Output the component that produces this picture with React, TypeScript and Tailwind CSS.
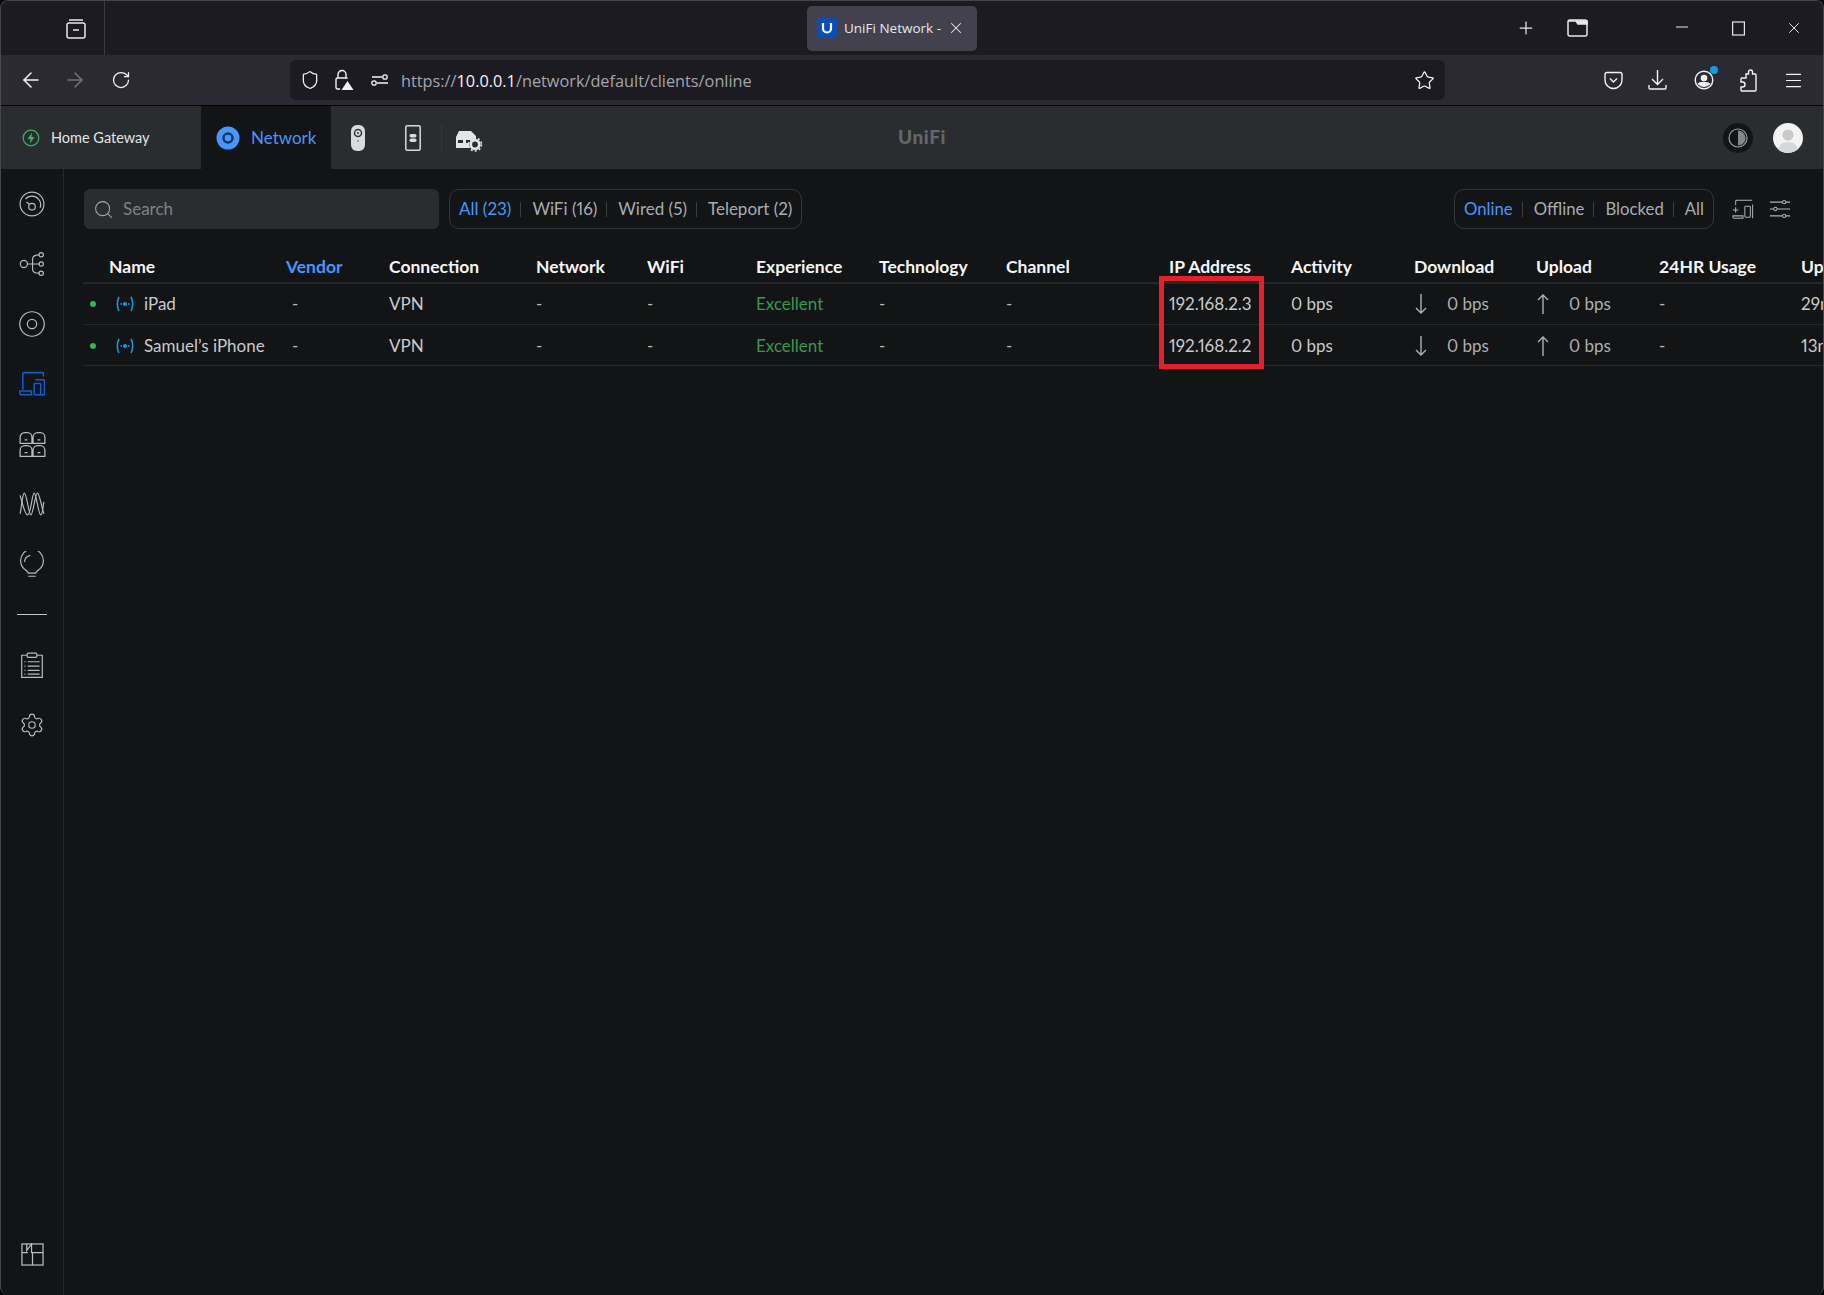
import React from 'react';
import {
  ArrowLeft, ArrowRight, Menu, Plus, RotateCw, Search, Settings, Shield, Star, X,
} from 'lucide-react';

const columns = 'grid grid-cols-[203px_103px_147px_111px_109px_123px_127px_163px_122px_123px_122px_123px_142px_150px]';

const headers = ['Name', 'Vendor', 'Connection', 'Network', 'WiFi', 'Experience', 'Technology', 'Channel', 'IP Address', 'Activity', 'Download', 'Upload', '24HR Usage', 'Uptime'];

const clients = [
  { name: 'iPad', ip: '192.168.2.3', uptime: '29m 10s' },
  { name: 'Samuel’s iPhone', ip: '192.168.2.2', uptime: '13m 42s' },
];

const Icon: React.FC<{ size?: number; className?: string; children: React.ReactNode }> = ({ size = 26, className = 'text-[#b9bbbd]', children }) => (
  <svg width={size} height={size} viewBox="0 0 24 24" fill="none" stroke="currentColor" strokeWidth="1.100" className={className}>
    {children}
  </svg>
);

const Dash = () => <span className="pl-[6px] text-[#b6b8ba]">-</span>;

const Segment: React.FC<{ items: string[]; className?: string }> = ({ items, className = 'text-[17px]' }) => (
  <div className={`flex h-[40px] items-center rounded-[10px] border border-[#34373a] px-[9px] proportional-nums ${className}`}>
    {items.map((item, i) => (
      <React.Fragment key={item}>
        {i > 0 && <span className="h-[15px] w-px bg-[#3b3e41]" />}
        <span className={`${i > 0 ? 'pl-[11px]' : ''} ${i < items.length - 1 ? 'pr-[9px]' : ''} ${i === 0 ? 'text-[#4797ff]' : 'text-[#a9acaf]'}`}>{item}</span>
      </React.Fragment>
    ))}
  </div>
);

const Arrow: React.FC<{ up?: boolean }> = ({ up }) => (
  <svg width="14" height="22" viewBox="0 0 14 22" fill="none" stroke="#aeb0b2" strokeWidth="1.400" className={up ? '' : 'rotate-180'}>
    <path d="M7 21V2M2 7l5-5 5 5" />
  </svg>
);

const Sidebar = () => (
  <aside className="flex w-[62px] shrink-0 flex-col items-center border-r border-[#26282b] pt-[5px] box-content">
    <div className="flex h-[60px] items-center justify-center">
      <Icon>
        <circle cx="12" cy="12" r="11" />
        <path d="M6 7.500A8 8 0 0 1 18 7.500a8 8 0 0 1 1.500 8" />
        <circle cx="12" cy="14.500" r="3" />
        <path d="M9.800 12.500 7 10" />
      </Icon>
    </div>
    <div className="flex h-[60px] items-center justify-center">
      <Icon>
        <circle cx="4.500" cy="12" r="3.300" />
        <circle cx="20.500" cy="3.500" r="2" />
        <circle cx="20.500" cy="12" r="2" />
        <circle cx="20.500" cy="20.500" r="2" />
        <path d="M8 12h10.500M18.500 3.500c-4 0-6 1-6 4v9c0 3 2 4 6 4" />
      </Icon>
    </div>
    <div className="flex h-[60px] items-center justify-center">
      <Icon>
        <circle cx="12" cy="12" r="11.300" />
        <circle cx="12" cy="12" r="4.300" />
      </Icon>
    </div>
    <div className="flex h-[60px] items-center justify-center">
      <Icon className="text-[#0f5fd0]">
        <path d="M3.500 17V2.500A1 1 0 0 1 4.500 1.500h17a1 1 0 0 1 1 1V5M.800 18.500H11.500V22H2.500A1.700 1.700 0 0 1 .800 20.300Z" strokeWidth="1.400" />
        <path d="M15 8h7.500a1 1 0 0 1 1 1v13H20" strokeWidth="1.400" />
        <rect x="14" y="11.500" width="6" height="10.500" rx=".8" strokeWidth="1.400" />
      </Icon>
    </div>
    <div className="flex h-[60px] items-center justify-center">
      <Icon size={27}>
        <path d="M1 11V5.500A4 4 0 0 1 5 1.500h2.500a4 4 0 0 1 4 4V11ZM12.500 11V5.500a4 4 0 0 1 4-4H19a4 4 0 0 1 4 4V11ZM1 22.500V17a4 4 0 0 1 4-4h2.500a4 4 0 0 1 4 4v5.500ZM12.500 22.500V17a4 4 0 0 1 4-4H19a4 4 0 0 1 4 4v5.500ZM5 7.800h2.500M16.500 7.800H19M5 19.300h2.500M16.500 19.300H19" />
      </Icon>
    </div>
    <div className="flex h-[60px] items-center justify-center">
      <Icon>
        <path d="M1 21C3 12 3 2 5 2s4 20 6 20 4-20 6-20 4 14 6 19" />
        <path d="M1 4c2 6 4 18 7 18s4-20 6-20 4 20 6 20 2-8 3-12" />
      </Icon>
    </div>
    <div className="flex h-[60px] items-center justify-center">
      <Icon>
        <path d="M8.500 20.500c0-1.500-.800-1.800-2.500-3A10.500 10.500 0 1 1 18 17.500c-1.700 1.200-2.500 1.500-2.500 3Z" />
        <path d="M5 10A7 7 0 0 1 10.500 4M8.500 23.300h7" />
      </Icon>
    </div>
    <div className="flex h-[41px] items-center justify-center">
      <span className="h-px w-[30px] bg-[#c5c7c9]" />
    </div>
    <div className="flex h-[60px] items-center justify-center">
      <Icon>
        <path d="M7.500 3H2.500v20.500h19V3h-5" />
        <rect x="7.500" y="1" width="9" height="4" rx="1" />
        <path d="M5 9h1M8 9h11M5 13h1M8 13h11M5 17h1M8 17h11M5 20.500h1M8 20.500h11" />
      </Icon>
    </div>
    <div className="flex h-[60px] items-center justify-center">
      <Settings size={26} strokeWidth={1.100} className="text-[#b9bbbd]" />
    </div>
    <div className="mb-[11px] mt-auto flex h-[60px] items-center justify-center">
      <Icon size={23}>
        <rect x="1" y="1" width="22" height="22" strokeWidth="1.300" />
        <path d="M6 1v7l5-7v9h12M1 10h6M12 10v13" strokeWidth="1.300" />
      </Icon>
    </div>
  </aside>
);

const ClientsTable = () => (
  <div className="relative ml-[19px] mt-[21px] w-[1760px] font-['Lato',sans-serif] proportional-nums">
    <div className={`${columns} h-[34px] items-center border-b-2 border-[#26282b] pt-[2px] text-[17.500px] font-bold text-[#f4f5f6]`}>
      {headers.map((h, i) => (
        <span key={h} className={i === 0 ? 'pl-[26px]' : i === 1 ? 'text-[#4797ff]' : ''}>{h}</span>
      ))}
    </div>
    {clients.map((c, row) => (
      <div key={c.name} className={`${columns} h-[41px] items-center border-b border-[#26282b] text-[17px] text-[#c9cbcd] ${row === 1 ? 'pt-[2px]' : ''}`}>
        <div className="flex items-center">
          <span className="ml-[7px] h-[6px] w-[6px] rounded-full bg-[#39b25a]" />
          <svg width="18" height="18" viewBox="0 0 18 18" fill="none" stroke="#1a96de" strokeWidth="1.600" className="ml-[20px]">
            <path d="M3 2C.800 6 .800 12 3 16M15 2c2.200 4 2.200 10 0 14" />
            <circle cx="9" cy="9" r="2" fill="#1a96de" stroke="none" />
            <circle cx="5.300" cy="9" r=".9" fill="#1a96de" stroke="none" />
            <circle cx="12.700" cy="9" r=".9" fill="#1a96de" stroke="none" />
          </svg>
          <span className="ml-[10px] whitespace-nowrap">{c.name}</span>
        </div>
        <Dash />
        <span>VPN</span>
        <span className="text-[#b6b8ba]">-</span>
        <span className="text-[#b6b8ba]">-</span>
        <span className="text-[#37994f]">Excellent</span>
        <span className="text-[#b6b8ba]">-</span>
        <span className="text-[#b6b8ba]">-</span>
        <span>{c.ip}</span>
        <span>0 bps</span>
        <div className="flex items-center">
          <Arrow />
          <span className="ml-[19px] text-[#aeb0b2]">0 bps</span>
        </div>
        <div className="flex items-center">
          <Arrow up />
          <span className="ml-[19px] text-[#aeb0b2]">0 bps</span>
        </div>
        <span className="text-[#b6b8ba]">-</span>
        <span className="whitespace-nowrap">{c.uptime}</span>
      </div>
    ))}
    <div className="absolute left-[1076px] top-[26px] h-[93px] w-[105px] border-[5px] border-[#e3202c]" />
  </div>
);

export default function App() {
  return (
    <div className="h-[1295px] w-[1824px] overflow-hidden bg-black">
      <div className="flex h-full flex-col overflow-hidden rounded-[8px] border-l border-r border-t border-[#46464c] bg-[#121416]">
        {/* browser tabs */}
        <div className="flex h-[54px] shrink-0 items-center bg-[#1c1b22] font-['Open_Sans',sans-serif] text-[#e8e8ea]">
          <div className="flex h-full w-[104px] items-center justify-end border-r border-[#3a3a40] pr-[18px]">
            <svg width="20" height="22" viewBox="0 0 20 22" fill="none" stroke="currentColor" strokeWidth="1.500">
              <rect x="1" y="6" width="18" height="15" rx="2" />
              <path d="M3 3h14M7 13h6" />
            </svg>
          </div>
          <div className="ml-[702px] flex h-[45px] w-[170px] items-center rounded-[5px] bg-[#42414d] pl-[10px]">
            <svg width="20" height="20" viewBox="0 0 20 20" fill="none">
              <rect width="20" height="20" rx="4" fill="#0a4fb8" />
              <path d="M6 5v5.500a4 4 0 0 0 8 0V5" stroke="#fff" strokeWidth="2.200" />
            </svg>
            <span className="ml-[7px] w-[102px] overflow-hidden whitespace-nowrap text-[13.500px]">UniFi Network - </span>
            <X size={18} strokeWidth={1.400} className="ml-[1px]" />
          </div>
          <Plus size={20} strokeWidth={1.500} className="ml-[539px]" />
          <svg width="21" height="18" viewBox="0 0 21 18" fill="none" stroke="currentColor" strokeWidth="1.500" className="ml-[31px]">
            <rect x="1" y="1" width="19" height="16" rx="2" />
            <path d="M1 2h8l2 3h9v-3H1z" fill="currentColor" />
          </svg>
          <svg width="14" height="14" viewBox="0 0 14 14" stroke="currentColor" strokeWidth="1.200" className="ml-[87px]">
            <path d="M1 6h12" />
          </svg>
          <svg width="13" height="15" viewBox="0 0 13 15" fill="none" stroke="currentColor" strokeWidth="1.200" className="ml-[43px]">
            <rect x=".6" y="1" width="11.800" height="13" />
          </svg>
          <X size={18} strokeWidth={1.300} className="ml-[40px]" />
        </div>

        {/* browser toolbar */}
        <div className="flex h-[50px] shrink-0 items-center border-b border-black bg-[#2b2a33] font-['Open_Sans',sans-serif] text-[#f3f3f5] box-content">
          <ArrowLeft size={24} strokeWidth={1.500} className="ml-[18px]" />
          <ArrowRight size={24} strokeWidth={1.500} className="ml-[20px] text-[#74737b]" />
          <RotateCw size={20} strokeWidth={1.500} className="ml-[24px]" />
          <div className="ml-[159px] flex h-[40px] w-[1155px] items-center rounded-[6px] bg-[#1c1b22]">
            <Shield size={20} strokeWidth={1.500} className="ml-[10px]" />
            <svg width="20" height="22" viewBox="0 0 20 22" fill="none" stroke="currentColor" strokeWidth="1.400" className="ml-[14px]">
              <path d="M4 9V5.500a4 4 0 0 1 8 0V9M6 20H3.500a1.500 1.500 0 0 1-1.500-1.500v-8A1.500 1.500 0 0 1 3.500 9h9a1.500 1.500 0 0 1 1 .5" />
              <path d="M13.500 12 19.500 21h-12z" fill="#f3f3f5" stroke="none" />
            </svg>
            <svg width="18" height="14" viewBox="0 0 18 14" fill="none" stroke="currentColor" strokeWidth="1.300" className="ml-[17px]">
              <path d="M1 4h10M6 10h11" />
              <circle cx="14" cy="4" r="2.200" />
              <circle cx="3" cy="10" r="2.200" />
            </svg>
            <span className="ml-[12px] mt-[2px] whitespace-nowrap text-[16.300px] text-[#a5a5ab]">
              https://<span className="text-[#f3f3f5]">10.0.0.1</span>/network/default/clients/online
            </span>
            <Star size={21} strokeWidth={1.400} className="ml-auto mr-[10px]" />
          </div>
          <svg width="19" height="19" viewBox="0 0 19 19" fill="none" stroke="currentColor" strokeWidth="1.400" className="ml-[159px]">
            <path d="M1 3.500A2 2 0 0 1 3 1.500h13a2 2 0 0 1 2 2V9a8.500 8.500 0 0 1-17 0Z" />
            <path d="M6 7.500l3.500 3.500L13 7.500" />
          </svg>
          <svg width="19" height="22" viewBox="0 0 19 22" fill="none" stroke="currentColor" strokeWidth="1.400" className="ml-[25px]">
            <path d="M9.500 1v14M4 10l5.500 5.500L15 10M1 16v3a1 1 0 0 0 1 1h15a1 1 0 0 0 1-1v-3" />
          </svg>
          <div className="relative ml-[27px]">
            <svg width="20" height="20" viewBox="0 0 20 20" fill="none" stroke="currentColor" strokeWidth="1.400">
              <circle cx="10" cy="10" r="8.800" />
              <circle cx="10" cy="8" r="2.600" fill="currentColor" />
              <path d="M4.500 14c1-2 9-2 11 0a8 8 0 0 1-11 0z" fill="currentColor" />
            </svg>
            <span className="absolute -right-[4px] -top-[4px] h-[8px] w-[8px] rounded-full bg-[#0a9fe8]" />
          </div>
          <svg width="18" height="23" viewBox="0 0 18 23" fill="none" stroke="currentColor" strokeWidth="1.400" className="ml-[25px]">
            <path d="M7 5h2.500V3a2 2 0 0 1 4 0v2H16a1 1 0 0 1 1 1v15a1 1 0 0 1-1 1H3a1 1 0 0 1-1-1v-3h1.500a2 2 0 0 0 0-5H2v-3a1 1 0 0 1 1-1h4Z" />
          </svg>
          <Menu size={21} strokeWidth={1.400} className="ml-[26px]" />
        </div>

        {/* unifi header */}
        <div className="flex h-[63px] shrink-0 items-center bg-[#2a2d30] font-['Lato',sans-serif]">
          <div className="flex h-full w-[200px] items-center">
            <svg width="18" height="18" viewBox="0 0 18 18" fill="none" stroke="#3bb35e" strokeWidth="1.200" className="ml-[21px]">
              <circle cx="9" cy="9" r="7.800" />
              <path d="M10 3.500 5.500 10H8.500L8 14.500 12.500 8H9.500Z" fill="#3bb35e" stroke="none" />
            </svg>
            <span className="ml-[11px] text-[14.500px] text-[#e3e4e5]">Home Gateway</span>
          </div>
          <div className="flex h-full w-[130px] items-center bg-[#121416]">
            <svg width="24" height="26" viewBox="0 0 24 26" fill="none" className="ml-[15px]">
              <circle cx="12" cy="13" r="11.500" fill="#4797ff" />
              <circle cx="12" cy="13" r="4.500" stroke="#15315c" strokeWidth="2.400" />
            </svg>
            <span className="ml-[11px] text-[17px] text-[#4797ff]">Network</span>
          </div>
          <svg width="14" height="26" viewBox="0 0 14 26" className="ml-[20px]">
            <rect width="14" height="26" rx="6" fill="#d9dadb" />
            <circle cx="7" cy="8" r="3.500" fill="none" stroke="#33363a" strokeWidth="1.500" />
            <circle cx="7" cy="8" r="1" fill="#33363a" />
            <circle cx="7" cy="16" r=".7" fill="#33363a" />
          </svg>
          <svg width="16" height="26" viewBox="0 0 16 26" fill="none" className="ml-[40px]">
            <rect x=".8" y=".8" width="14.400" height="24.400" rx="1.500" stroke="#d9dadb" strokeWidth="1.500" />
            <rect x="4.500" y="9" width="7" height="3.500" rx="1.700" fill="#d9dadb" />
            <rect x="4.500" y="13.500" width="7" height="3.500" rx="1.700" fill="#d9dadb" />
          </svg>
          <span className="ml-[20px] h-[28px] w-px bg-[#34373a]" />
          <svg width="28" height="22" viewBox="0 0 28 22" className="ml-[13px] mt-[6px]">
            <path d="M4 1h12l5 5v4h-4l-3 3v5H1V7Z" fill="#e4e5e6" />
            <path d="M3 10h5v3H3zM11 10h4v3h-4z" fill="#2a2d30" />
            <circle cx="20" cy="14.500" r="4.300" fill="none" stroke="#e4e5e6" strokeWidth="2.800" />
            <circle cx="20" cy="14.500" r="6.500" fill="none" stroke="#e4e5e6" strokeWidth="1.600" strokeDasharray="2 2.100" />
          </svg>
          <span className="ml-[415px] text-[19px] font-black tracking-[0.6px] text-[#63676b]">UniFi</span>
          <div className="ml-[777px] flex h-[30px] w-[30px] items-center justify-center rounded-full bg-[#121416]">
            <svg width="20" height="20" viewBox="0 0 20 20" fill="none">
              <circle cx="10" cy="10" r="9" stroke="#9a9c9f" strokeWidth="1.200" />
              <path d="M10 2.500a7.500 7.500 0 0 1 0 15Z" fill="#85888b" />
            </svg>
          </div>
          <div className="ml-[20px] flex h-[30px] w-[30px] items-end justify-center overflow-hidden rounded-full bg-[#f3f3f3]">
            <svg width="30" height="30" viewBox="0 0 30 30">
              <circle cx="15" cy="12" r="5.500" fill="#c9cacc" />
              <path d="M5 30c0-8 4-11 10-11s10 3 10 11Z" fill="#d6d7d9" />
            </svg>
          </div>
        </div>

        <div className="flex min-h-0 flex-1">
          <Sidebar />
          <main className="min-w-0 flex-1 overflow-hidden font-['Lato',sans-serif]">
            <div className="ml-[20px] mt-[20px] flex items-center pr-[32px]">
              <div className="flex h-[40px] w-[355px] items-center rounded-[6px] bg-[#2a2d30] text-[17px] text-[#7f8285]">
                <Search size={21} strokeWidth={1.200} className="ml-[9px] text-[#a5a7a9]" />
                <span className="ml-[9px] -mt-[1px] leading-none">Search</span>
              </div>
              <div className="ml-[10px]">
                <Segment items={['All (23)', 'WiFi (16)', 'Wired (5)', 'Teleport (2)']} />
              </div>
              <div className="ml-auto mr-[1px]">
                <Segment items={['Online', 'Offline', 'Blocked', 'All']} className="text-[16.750px]" />
              </div>
              <Icon size={22} className="ml-[17px] text-[#b0b2b4]">
                <path d="M4 8V3.500A1 1 0 0 1 5 2.500h17M1 13h6M4 10v6M1 19.500h11V22H2a1 1 0 0 1-1-1Z" />
                <rect x="14" y="9" width="6" height="12" rx="1" />
                <path d="M22.500 7v15" />
              </Icon>
              <Icon size={22} className="ml-[15px] text-[#b0b2b4]">
                <path d="M1 4.500h22M1 12h22M1 19.500h22" />
                <circle cx="16.500" cy="4.500" r="1.800" fill="#121416" />
                <circle cx="7" cy="12" r="1.800" fill="#121416" />
                <circle cx="16.500" cy="19.500" r="1.800" fill="#121416" />
              </Icon>
            </div>
            <ClientsTable />
          </main>
        </div>
      </div>
    </div>
  );
}
